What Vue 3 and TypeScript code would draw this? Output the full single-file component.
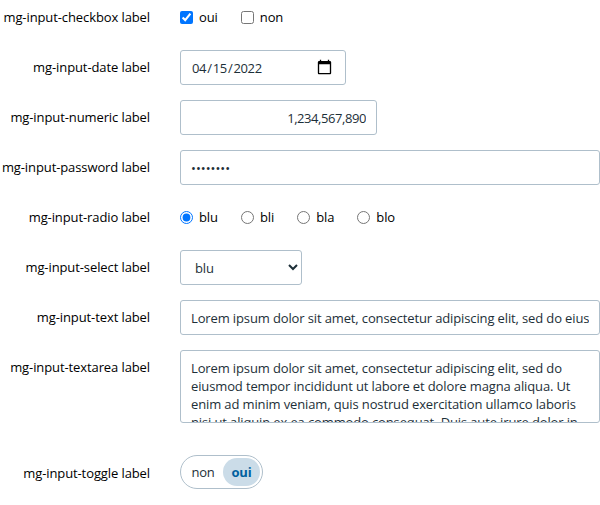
<script setup lang="ts">
import { ref } from 'vue'

const checks = ref<string[]>(['oui'])
const date = ref('2022-04-15')
const amount = ref('1,234,567,890')
const password = ref('password')
const radio = ref('blu')
const selected = ref('blu')
const enabled = ref(true)
const text = ref('Lorem ipsum dolor sit amet, consectetur adipiscing elit, sed do eiusmod tempor incididunt ut labore et dolore magna aliqua.')
const longText = ref('Lorem ipsum dolor sit amet, consectetur adipiscing elit, sed do eiusmod tempor incididunt ut labore et dolore magna aliqua. Ut enim ad minim veniam, quis nostrud exercitation ullamco laboris nisi ut aliquip ex ea commodo consequat. Duis aute irure dolor in reprehenderit in voluptate velit esse cillum dolore.')
const yesNo = ['oui', 'non']
const choices = ['blu', 'bli', 'bla', 'blo']
</script>

<template>
  <form class="form">
    <div class="row">
      <span class="label">mg-input-checkbox label</span>
      <div class="group">
        <label v-for="c in yesNo" :key="c" class="option"><input v-model="checks" type="checkbox" :value="c" />{{ c }}</label>
      </div>
    </div>
    <div class="row">
      <label class="label" for="date">mg-input-date label</label>
      <input id="date" v-model="date" class="box date" type="date" />
    </div>
    <div class="row">
      <label class="label" for="num">mg-input-numeric label</label>
      <input id="num" v-model="amount" class="box numeric" type="text" />
    </div>
    <div class="row">
      <label class="label" for="pwd">mg-input-password label</label>
      <input id="pwd" v-model="password" class="box wide password" type="password" autocomplete="off" />
    </div>
    <div class="row">
      <span class="label">mg-input-radio label</span>
      <div class="group">
        <label v-for="c in choices" :key="c" class="option"><input v-model="radio" type="radio" name="radio" :value="c" />{{ c }}</label>
      </div>
    </div>
    <div class="row">
      <label class="label" for="sel">mg-input-select label</label>
      <select id="sel" v-model="selected" class="box select">
        <option v-for="c in choices" :key="c" :value="c">{{ c }}</option>
      </select>
    </div>
    <div class="row">
      <label class="label" for="txt">mg-input-text label</label>
      <input id="txt" v-model="text" class="box wide" type="text" />
    </div>
    <div class="row area-row">
      <label class="label" for="area">mg-input-textarea label</label>
      <textarea id="area" v-model="longText" class="box wide area"></textarea>
    </div>
    <div class="row">
      <span class="label toggle-label">mg-input-toggle label</span>
      <button type="button" class="toggle" role="switch" :aria-checked="enabled" @click="enabled = !enabled">
        <span class="state" :class="{ on: !enabled }">non</span>
        <span class="state" :class="{ on: enabled }">oui</span>
      </button>
    </div>
  </form>
</template>

<style>
body {
  background: #fff;
  overflow: hidden;
}
</style>

<style scoped>
.form {
  font: 13px/18px "Open Sans", sans-serif;
  letter-spacing: -0.1px;
  color: #000;
  width: 600px;
  height: 505px;
  overflow: hidden;
}
.row {
  display: flex;
  align-items: flex-start;
  height: 35px;
  margin-bottom: 15px;
}
.label {
  width: 150px;
  flex: none;
  margin-right: 30px;
  padding-top: 8px;
  text-align: right;
  white-space: nowrap;
}
.group {
  display: flex;
  padding-top: 8px;
  gap: 23px;
}
.option {
  display: flex;
  align-items: center;
}
.option input {
  width: 13px;
  height: 13px;
  margin: 0 6px 0 0;
}
.box {
  box-sizing: border-box;
  height: 35px;
  margin: 0;
  padding: 0 10px;
  border: 1px solid #afbfcb;
  border-radius: 3px;
  background: #fff;
  color: #1d2f38;
  font: inherit;
  letter-spacing: -0.13px;
}
.date {
  width: 166px;
  letter-spacing: -0.32px;
}
.date::-webkit-calendar-picker-indicator {
  width: 17px;
  height: 17px;
  padding: 1px;
  margin-right: 1px;
}
.numeric {
  width: 197px;
  text-align: right;
  letter-spacing: -0.43px;
}
.wide {
  width: 420px;
}
.password {
  letter-spacing: 0;
}
.select {
  width: 122px;
}
.area-row {
  height: 73px;
  margin-bottom: 32px;
}
.area {
  height: 73px;
  padding: 8px 10px;
  resize: none;
  overflow: hidden;
}
.toggle {
  display: flex;
  box-sizing: border-box;
  width: 83px;
  height: 34px;
  padding: 2px;
  border: 1px solid #afbfcb;
  border-radius: 17px;
  background: #fff;
  color: #1d2f38;
  font: inherit;
  letter-spacing: -0.2px;
}
.toggle-label {
  padding-top: 9px;
}
.state {
  width: 40px;
  line-height: 28px;
  border-radius: 14px;
  text-align: center;
}
.state:last-child {
  width: 37px;
}
.on {
  background: #cbdce8;
  color: #00609f;
  font-weight: 700;
}
</style>
